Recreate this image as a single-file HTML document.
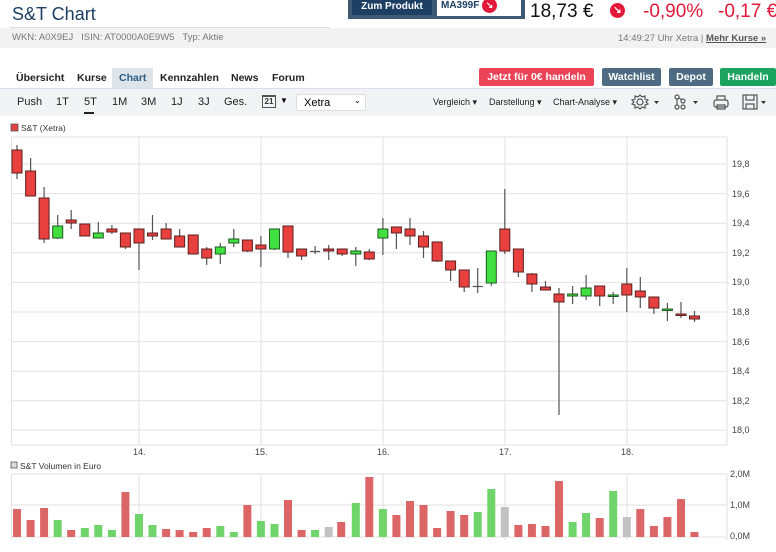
<!DOCTYPE html>
<html><head><meta charset="utf-8"><style>
*{margin:0;padding:0;box-sizing:border-box}
body{width:776px;height:552px;overflow:hidden;background:#fff;font-family:"Liberation Sans",sans-serif;position:relative}
.a{position:absolute;white-space:nowrap}
.tab{position:absolute;top:72px;font-size:10.5px;font-weight:bold;color:#222}
.btn{position:absolute;top:68px;height:18px;color:#fff;font-size:10.5px;font-weight:bold;text-align:center;line-height:18px;border-radius:2px}
.tb{position:absolute;top:96px;font-size:11px;color:#222}
.sm{position:absolute;top:97px;font-size:9px;color:#222}
</style></head><body>
<div class="a" style="left:12px;top:4px;font-size:18px;color:#1d3f63">S&amp;T Chart</div>
<div class="a" style="left:10px;top:27px;width:320px;height:1px;background:#ddd"></div>
<div class="a" style="left:0;top:28px;width:776px;height:20px;background:#f2f2f2"></div>
<div class="a" style="left:12px;top:32px;font-size:9.5px;color:#777">WKN: A0X9EJ&nbsp;&nbsp;&nbsp;ISIN: AT0000A0E9W5&nbsp;&nbsp;&nbsp;Typ: Aktie</div>
<div class="a" style="left:618px;top:33px;font-size:9.5px;color:#777">14:49:27 Uhr Xetra | <u style="color:#555;font-weight:bold">Mehr Kurse »</u></div>
<div class="a" style="left:348px;top:0;width:177px;height:19px;background:#3d5a75"></div>
<div class="a" style="left:352px;top:0;width:80px;height:15px;background:#1d3f63;color:#fff;font-size:10px;font-weight:bold;text-align:center;line-height:14px">Zum Produkt</div>
<div class="a" style="left:437px;top:0;width:84px;height:16px;background:#fff;color:#1d3f63;font-size:10px;font-weight:bold;padding-left:4px;line-height:12px">MA399F</div>
<div class="a" style="left:482px;top:-2px;width:15px;height:15px;border-radius:50%;background:#e3193a;color:#fff;font-size:9px;text-align:center;line-height:15px;font-weight:bold">↘</div>
<div class="a" style="left:530px;top:1px;font-size:19px;color:#111">18,73 €</div>
<div class="a" style="left:610px;top:3px;width:15px;height:15px;border-radius:50%;background:#e3193a;color:#fff;font-size:10px;text-align:center;line-height:15px;font-weight:bold">↘</div>
<div class="a" style="left:643px;top:1px;font-size:19px;color:#e3193a">-0,90%</div>
<div class="a" style="left:718px;top:1px;font-size:19px;color:#e3193a">-0,17 €</div>

<div class="a" style="left:112px;top:68px;width:41px;height:20px;background:#dde5ea"></div>
<div class="tab" style="left:16px">Übersicht</div>
<div class="tab" style="left:77px">Kurse</div>
<div class="tab" style="left:119px;color:#2b5a80">Chart</div>
<div class="tab" style="left:160px">Kennzahlen</div>
<div class="tab" style="left:231px">News</div>
<div class="tab" style="left:272px">Forum</div>
<div class="btn" style="left:479px;width:115px;background:#ec4457">Jetzt für 0€ handeln</div>
<div class="btn" style="left:602px;width:59px;background:#4d6b82">Watchlist</div>
<div class="btn" style="left:669px;width:44px;background:#4d6b82">Depot</div>
<div class="btn" style="left:720px;width:56px;background:#1ba45f">Handeln</div>

<div class="a" style="left:0;top:88px;width:776px;height:28px;background:#f1f3f5;border-top:1px solid #dde"></div>
<div class="tb" style="left:17px">Push</div>
<div class="tb" style="left:56px">1T</div>
<div class="tb" style="left:84px">5T</div>
<div class="a" style="left:84px;top:112px;width:10px;height:2px;background:#222"></div>
<div class="tb" style="left:112px">1M</div>
<div class="tb" style="left:141px">3M</div>
<div class="tb" style="left:171px">1J</div>
<div class="tb" style="left:198px">3J</div>
<div class="tb" style="left:224px">Ges.</div>
<div class="a" style="left:262px;top:95px;width:14px;height:13px;border:1px solid #555;border-top-width:2px;font-size:8px;font-weight:bold;text-align:center;line-height:10px;color:#333">21</div>
<div class="a" style="left:280px;top:96px;font-size:8px">▼</div>
<div class="a" style="left:296px;top:94px;width:70px;height:17px;background:#fff;border:1px solid #ddd;border-radius:2px;font-size:11px;padding:2px 0 0 7px">Xetra<span style="position:absolute;left:57px;top:1px;font-size:8px">⌄</span></div>
<div class="sm" style="left:433px">Vergleich ▾</div>
<div class="sm" style="left:489px">Darstellung ▾</div>
<div class="sm" style="left:553px">Chart-Analyse ▾</div>
<svg class="a" style="left:630px;top:92px" width="146" height="20" viewBox="0 0 146 20" fill="none" stroke="#555" stroke-width="1.2">
<circle cx="10" cy="10" r="3"/><path d="M10 3l2 2 3-1 0 3 3 1-2 2 2 2-3 1 0 3-3-1-2 2-2-2-3 1 0-3-3-1 2-2-2-2 3-1 0-3 3 1z"/>
<path d="M24 9h5l-2.5 3z" fill="#333" stroke="none"/>
<circle cx="47" cy="5" r="2"/><circle cx="53" cy="9" r="2"/><circle cx="47" cy="15" r="2"/><circle cx="53" cy="15" r="2"/><path d="M47 7v6M49 6l3 2"/>
<path d="M63 9h5l-2.5 3z" fill="#333" stroke="none"/>
<rect x="84" y="8" width="14" height="7" rx="2"/><path d="M87 8V4h8v4M87 13h8v4h-8z"/>
<rect x="113" y="3" width="14" height="14"/><path d="M116 3v5h8V3M116 17v-5h8v5"/>
<path d="M131 9h5l-2.5 3z" fill="#333" stroke="none"/>
</svg>

<svg class="a" style="left:0;top:118px" width="776" height="434" viewBox="0 118 776 434" font-family="Liberation Sans" font-size="8.5" fill="#333">
<rect x="11" y="124" width="7" height="7" fill="#e34242" stroke="#555" stroke-width=".8"/>
<text x="21" y="131">S&amp;T (Xetra)</text>
<g stroke="#e2e2e2" stroke-width="1">
<path d="M11 137H727M11 164H727M11 193.6H727M11 223.2H727M11 252.8H727M11 282.4H727M11 312H727M11 341.6H727M11 371.2H727M11 400.8H727M11 430H727"/>
<path d="M11.5 137V445M139 137V445M261 137V445M383 137V445M505 137V445M627 137V445M727 137V445M11 445H727"/>
<path d="M11 474H727M11 505H727M11 537H727M11.5 474V540M139 474V540M261 474V540M383 474V540M505 474V540M627 474V540M727 474V540"/>
</g>
<g font-size="9" fill="#444">
<text x="732" y="167">19,8</text><text x="732" y="197">19,6</text><text x="732" y="226">19,4</text><text x="732" y="256">19,2</text><text x="732" y="285">19,0</text><text x="732" y="315">18,8</text><text x="732" y="345">18,6</text><text x="732" y="374">18,4</text><text x="732" y="404">18,2</text><text x="732" y="433">18,0</text>
<text x="133" y="455">14.</text><text x="255" y="455">15.</text><text x="377" y="455">16.</text><text x="499" y="455">17.</text><text x="621" y="455">18.</text>
<text x="730" y="477">2,0M</text><text x="730" y="508">1,0M</text><text x="730" y="539">0,0M</text>
</g>
<rect x="11" y="462" width="6" height="6" fill="#ddd" stroke="#555" stroke-width=".8"/>
<text x="20" y="469">S&amp;T Volumen in Euro</text>
<g stroke="#555" stroke-width="1.2">
<path d="M17 145V179M30.6 158V196M44.1 187V243M57.7 215V239M71.2 210V229M84.8 224V236M98.3 222V238M111.9 225V234M125.4 233V249M139 229V270M152.5 215V240M166.1 223V239M179.6 229V247M193.2 235V254M206.7 247V265M220.3 243V264M233.8 229V247M247.4 240V252M260.9 236V267M274.5 229V250M288 226V258M301.6 249V260M315.1 246V254M310.1 251.5H320.1M328.7 245V260M342.2 249V256M355.8 247V266M369.3 249V260M382.9 218V255M396.4 227V249M410 218V245M423.5 231V258M437.1 242V262M450.6 261V281M464.2 270V292M477.7 268V293M472.7 286.5H482.7M491.3 251V286M504.8 189V254M518.4 249V277M531.9 273V292M545.5 281V290M559 288V415M572.6 286V304M586.1 275V300M599.7 286V306M613.2 292V304M626.8 268V312M640.3 277V308M653.9 297V314M667.4 303V321M681 302V318M694.5 311V322"/>
</g>
<g fill="#e83f3f" stroke="#5a2020" stroke-width="1">
<rect x="12" y="150" width="10" height="23"/><rect x="25.6" y="171" width="10" height="25"/><rect x="39.1" y="198" width="10" height="41"/><rect x="66.2" y="220" width="10" height="3"/><rect x="79.8" y="224" width="10" height="12"/><rect x="106.9" y="229" width="10" height="3"/><rect x="120.4" y="233" width="10" height="14"/><rect x="134" y="229" width="10" height="14"/><rect x="147.5" y="233" width="10" height="3"/><rect x="161.1" y="229" width="10" height="10"/><rect x="174.6" y="236" width="10" height="11"/><rect x="188.2" y="235" width="10" height="19"/><rect x="201.7" y="249" width="10" height="9"/><rect x="242.4" y="240" width="10" height="11"/><rect x="255.9" y="245" width="10" height="4"/><rect x="283" y="226" width="10" height="26"/><rect x="296.6" y="249" width="10" height="7"/><rect x="323.7" y="249" width="10" height="2"/><rect x="337.2" y="249" width="10" height="5"/><rect x="364.3" y="252" width="10" height="7"/><rect x="391.4" y="227" width="10" height="6"/><rect x="405" y="229" width="10" height="7"/><rect x="418.5" y="236" width="10" height="11"/><rect x="432.1" y="242" width="10" height="19"/><rect x="445.6" y="261" width="10" height="9"/><rect x="459.2" y="270" width="10" height="17"/><rect x="499.8" y="229" width="10" height="22"/><rect x="513.4" y="249" width="10" height="23"/><rect x="526.9" y="274" width="10" height="10"/><rect x="540.5" y="287" width="10" height="3"/><rect x="554" y="294" width="10" height="8"/><rect x="594.7" y="286" width="10" height="10"/><rect x="621.8" y="284" width="10" height="11"/><rect x="635.3" y="291" width="10" height="6"/><rect x="648.9" y="297" width="10" height="11"/><rect x="676" y="314" width="10" height="1.5"/><rect x="689.5" y="316" width="10" height="3"/>
</g>
<g fill="#3fe03f" stroke="#205a20" stroke-width="1">
<rect x="52.7" y="226" width="10" height="12"/><rect x="93.3" y="233" width="10" height="5"/><rect x="215.3" y="247" width="10" height="7"/><rect x="228.8" y="239" width="10" height="4"/><rect x="269.5" y="229" width="10" height="20"/><rect x="350.8" y="251" width="10" height="3"/><rect x="377.9" y="229" width="10" height="9"/><rect x="486.3" y="251" width="10" height="32"/><rect x="567.6" y="294" width="10" height="2"/><rect x="581.1" y="288" width="10" height="8"/><rect x="608.2" y="295" width="10" height="1.5"/><rect x="662.4" y="309" width="10" height="1.5"/>
</g>
<g fill="#dc6565">
<rect x="13" y="509" width="8" height="28"/><rect x="26.6" y="520" width="8" height="17"/><rect x="40.1" y="508" width="8" height="29"/><rect x="67.2" y="530" width="8" height="7"/><rect x="121.4" y="492" width="8" height="45"/><rect x="162.1" y="529" width="8" height="8"/><rect x="175.6" y="530" width="8" height="7"/><rect x="189.2" y="532" width="8" height="5"/><rect x="202.7" y="528" width="8" height="9"/><rect x="243.4" y="505" width="8" height="32"/><rect x="284" y="500" width="8" height="37"/><rect x="297.6" y="530" width="8" height="7"/><rect x="337.2" y="522" width="8" height="15"/><rect x="365.3" y="477" width="8" height="60"/><rect x="392.4" y="515" width="8" height="22"/><rect x="406" y="501" width="8" height="36"/><rect x="419.5" y="505" width="8" height="32"/><rect x="433.1" y="528" width="8" height="9"/><rect x="446.6" y="511" width="8" height="26"/><rect x="460.2" y="515" width="8" height="22"/><rect x="514.4" y="525" width="8" height="12"/><rect x="527.9" y="524" width="8" height="13"/><rect x="541.5" y="526" width="8" height="11"/><rect x="555" y="481" width="8" height="56"/><rect x="595.7" y="518" width="8" height="19"/><rect x="636.3" y="509" width="8" height="28"/><rect x="649.9" y="526" width="8" height="11"/><rect x="663.4" y="517" width="8" height="20"/><rect x="677" y="499" width="8" height="38"/><rect x="690.5" y="532" width="8" height="5"/>
</g>
<g fill="#6fd46a">
<rect x="53.7" y="520" width="8" height="17"/><rect x="80.8" y="528" width="8" height="9"/><rect x="94.3" y="525" width="8" height="12"/><rect x="107.9" y="530" width="8" height="7"/><rect x="135" y="514" width="8" height="23"/><rect x="148.5" y="525" width="8" height="12"/><rect x="216.3" y="526" width="8" height="11"/><rect x="229.8" y="532" width="8" height="5"/><rect x="256.9" y="521" width="8" height="16"/><rect x="270.5" y="524" width="8" height="13"/><rect x="311.1" y="530" width="8" height="7"/><rect x="351.8" y="503" width="8" height="34"/><rect x="378.9" y="509" width="8" height="28"/><rect x="473.7" y="512" width="8" height="25"/><rect x="487.3" y="489" width="8" height="48"/><rect x="568.6" y="522" width="8" height="15"/><rect x="582.1" y="513" width="8" height="24"/><rect x="609.2" y="491" width="8" height="46"/>
</g>
<g fill="#c2c2c2">
<rect x="324.7" y="527" width="8" height="10"/><rect x="500.8" y="507" width="8" height="30"/><rect x="622.8" y="517" width="8" height="20"/>
</g>
</svg>
</body></html>
